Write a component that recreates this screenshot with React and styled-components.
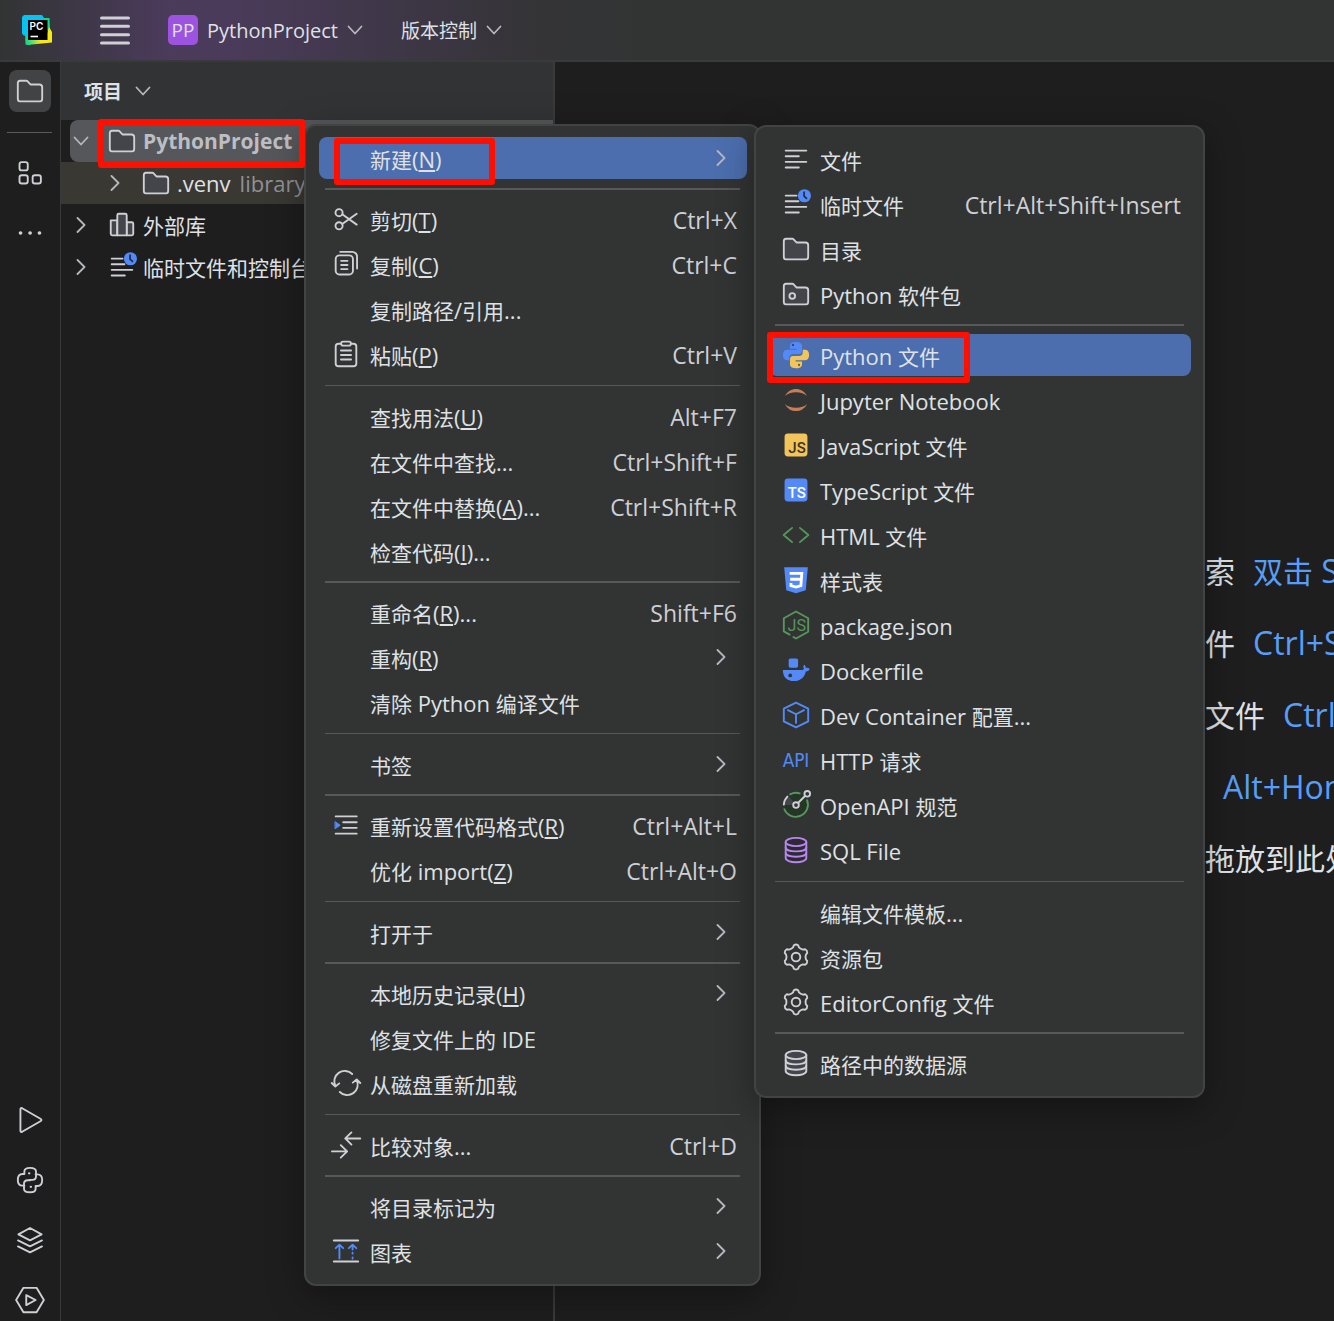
import React from "react";
import styled, { createGlobalStyle, css } from "styled-components";

const GlobalStyle = createGlobalStyle`
  * {
    box-sizing: border-box;
  }
  body {
    margin: 0;
    overflow: hidden;
    background: #1e1e1e;
    color: #dfe1e5;
    font-family: "Open Sans", "Noto Sans CJK SC", sans-serif;
    font-size: 21px;
  }
  button {
    border: none;
    padding: 0;
    background: transparent;
    color: inherit;
    font: inherit;
    cursor: pointer;
  }
  ul {
    margin: 0;
    padding: 0;
    list-style: none;
  }
`;

const Window = styled.div`
  height: 100vh;
  display: flex;
  flex-direction: column;
`;

const TitleBar = styled.header`
  height: 62px;
  flex-shrink: 0;
  display: flex;
  align-items: center;
  padding-left: 22px;
  border-bottom: 2px solid #393a3c;
  background: linear-gradient(90deg, #323434 0px, #4b3b5c 170px, #4a3b5a 230px, #353438 520px, #323434 640px);
  font-size: 19px;
`;
const MenuButton = styled.button`
  display: flex;
  margin-left: 48px;
`;
const TitleButton = styled.button`
  display: flex;
  align-items: center;
  gap: 9px;
  margin-left: 38px;
  white-space: nowrap;
`;
const Badge = styled.span`
  width: 30px;
  height: 30px;
  border-radius: 5px;
  background: #9c54e0;
  line-height: 30px;
  text-align: center;
`;

const Body = styled.div`
  flex: 1;
  min-height: 0;
  display: flex;
`;

const Strip = styled.nav`
  width: 61px;
  flex-shrink: 0;
  display: flex;
  flex-direction: column;
  align-items: center;
  gap: 18px;
  padding: 8px 1px 0 0;
  border-right: 1px solid #393a3c;
`;
const StripButton = styled.button`
  width: 42px;
  height: 42px;
  flex-shrink: 0;
  display: flex;
  align-items: center;
  justify-content: center;
  border-radius: 8px;
  background: ${(p) => (p.$active ? "#424344" : "transparent")};
`;
const StripLine = styled.div`
  width: 45px;
  height: 1px;
  margin: 2px 0 1px;
  flex-shrink: 0;
  background: #5a5c5e;
`;
const Spacer = styled.div`
  flex: 1;
`;

const Panel = styled.aside`
  width: 494px;
  flex-shrink: 0;
  border-right: 2px solid #393a3c;
`;
const PanelHeader = styled.div`
  height: 58px;
  display: flex;
  align-items: center;
  padding-left: 23px;
  background: #323335;
`;
const PanelTitle = styled.button`
  display: flex;
  align-items: center;
  gap: 13px;
  font-size: 19px;
  font-weight: 700;
`;
const TreeRow = styled.div`
  position: relative;
  height: 42px;
  display: flex;
  align-items: center;
  padding-left: ${(p) => 9 + p.$level * 34}px;
  white-space: nowrap;
  ${(p) =>
    p.$tone === "library" &&
    css`
      background: #3a3833;
    `}
  ${(p) =>
    p.$tone === "selected" &&
    css`
      margin-left: 9px;
      padding-left: 0;
      border-radius: 8px 0 0 8px;
      background: #55575a;
      color: #bcbec4;
      font-weight: 700;
    `}
`;
const Toggle = styled.button`
  width: 22px;
  display: flex;
  justify-content: center;
  margin-right: 15px;
`;
const TreeName = styled.span`
  margin: 0 9px 0 6px;
`;
const Muted = styled.span`
  color: #8f9196;
`;

const Editor = styled.main`
  flex: 1;
  min-width: 0;
  display: flex;
  flex-direction: column;
  justify-content: center;
  padding: 46px 0 0 560px;
  overflow: hidden;
`;
const Hint = styled.div`
  height: 72px;
  line-height: 72px;
  font-size: 30px;
  white-space: nowrap;
`;
const HintKey = styled.span`
  margin-left: 18px;
  color: #589df6;
`;

const Popup = styled.ul`
  position: absolute;
  left: ${(p) => p.$left}px;
  top: ${(p) => p.$top}px;
  width: ${(p) => p.$width}px;
  padding: 10px 12px 10px 13px;
  border: 2px solid #424444;
  border-radius: 12px;
  background: #323433;
  box-shadow: 0 10px 36px rgba(0, 0, 0, 0.35);
  z-index: 1;
`;
const MenuRow = styled.li`
  height: 45px;
  padding-top: 1px;
`;
const Item = styled.button`
  position: relative;
  width: 100%;
  height: 42px;
  display: flex;
  align-items: center;
  padding: 0 10px 0 12px;
  border-radius: 8px;
  background: ${(p) => (p.$active ? "#4c6eae" : "transparent")};
  text-align: left;
  white-space: nowrap;
`;
const IconSlot = styled.span`
  width: 30px;
  height: 30px;
  margin-right: 9px;
  flex-shrink: 0;
`;
const ItemText = styled.span`
  flex: 1;
  padding-top: 2px;
  u {
    text-decoration-thickness: 2px;
    text-underline-offset: 2px;
  }
`;
const Shortcut = styled.kbd`
  padding-top: 2px;
  font-family: inherit;
  font-size: 23px;
  color: #ced0d6;
`;
const SubArrow = styled.span`
  display: flex;
  margin-right: 8px;
`;
const Divider = styled.li`
  height: ${(p) => (p.$thick ? 2 : 1)}px;
  margin: ${(p) => (p.$thick ? 7 : 8)}px 7px ${(p) => (p.$thick ? 7 : 8)}px 6px;
  background: #575958;
`;

// red frame drawn round a step of the walkthrough
const Mark = styled.span`
  position: absolute;
  left: ${(p) => p.$x}px;
  top: ${(p) => p.$y}px;
  width: ${(p) => p.$w}px;
  height: ${(p) => p.$h}px;
  border: 6px solid #ff0f00;
  border-radius: 3px;
  pointer-events: none;
  z-index: 3;
`;

// latin letters are set one size up beside the chinese ones
const Latin = styled.span`
  font-size: ${(p) => p.$size}px;
`;
const Mixed = ({ text, size = 22 }) =>
  text
    .split(/([\x20-\x7e]+)/)
    .filter(Boolean)
    .map((part, i) =>
      /[\x20-\x7e]/.test(part) ? (
        <Latin key={i} $size={size}>
          {part.split(/(_._)/).map((s, j) => (/^_._$/.test(s) ? <u key={j}>{s[1]}</u> : s))}
        </Latin>
      ) : (
        part
      )
    );

/* ---------- icons, 16 unit grid ---------- */
const Svg = styled.svg`
  display: block;
  fill: none;
  stroke: #ced0d6;
  stroke-linecap: round;
  stroke-linejoin: round;
`;
const Icon = ({ children, size = 30, ...rest }) => (
  <Svg width={size} height={size} viewBox="0 0 16 16" aria-hidden="true" {...rest}>
    {children}
  </Svg>
);

const ChevronSvg = styled(Svg)`
  stroke: #b4b8bf;
`;
const Chevron = ({ dir = "down" }) => (
  <ChevronSvg width="16" height="16" viewBox="0 0 16 16" strokeWidth="1.8" aria-hidden="true">
    <path d={dir === "down" ? "M1.5 4.5 8 11.5 14.5 4.5" : "M4.5 1 11.5 8 4.5 15"} />
  </ChevronSvg>
);

const folderPath =
  "M8.1 4.35 8.25 4.5H13A1.5 1.5 0 0 1 14.5 6V12.1C14.5 12.95 13.93 13.5 13.37 13.5H2.63C2.07 13.5 1.5 12.95 1.5 12.1V3.87C1.5 3.05 2.07 2.5 2.63 2.5H6.12C6.26 2.5 6.39 2.56 6.48 2.65Z";
const Folder = ({ fill = "#43454a" }) => (
  <Icon>
    <path d={folderPath} fill={fill} />
  </Icon>
);
const PackageFolder = () => (
  <Icon>
    <path d={folderPath} fill="#43454a" />
    <circle cx="6" cy="9" r="1.5" />
  </Icon>
);
const TextFile = () => (
  <Icon>
    <path d="M2.5 3.5H13.5M2.5 6.5H9.5M2.5 9.5H13.5M2.5 12.5H9.5" />
  </Icon>
);
const Scratch = () => (
  <Icon overflow="visible">
    <path d="M2.5 3.5H8.3M2.5 6.5H9.3M2.5 9.5H13.5M2.5 12.5H9.5" />
    <circle cx="12.5" cy="3.6" r="3.5" fill="#548af7" stroke="none" />
    <path d="M12.3 1.7V3.8L13.6 5" stroke="#1e2a45" strokeWidth="0.9" />
  </Icon>
);
const Library = () => (
  <Icon>
    <path d="M2 5.5H5.5V13.5H2.8A.8.8 0 0 1 2 12.7ZM10.5 6.5H13.2A.8.8 0 0 1 14 7.3V12.7A.8.8 0 0 1 13.2 13.5H10.5Z" fill="#43454a" />
    <path d="M5.5 2.8A.8.8 0 0 1 6.3 2H9.7A.8.8 0 0 1 10.5 2.8V13.5H5.5Z" fill="#43454a" />
  </Icon>
);
const Scissors = () => (
  <Icon>
    <circle cx="4.3" cy="4.6" r="1.9" />
    <circle cx="4.3" cy="11.6" r="1.9" />
    <path d="M6 5.5 13.7 11M6 10.7 13.7 5.2" />
  </Icon>
);
const Copy = () => (
  <Icon>
    <rect x="2.5" y="3.4" width="9.2" height="10.2" rx="2" />
    <path d="M4.9 1.5H11.3A2.6 2.6 0 0 1 13.9 4.1V10.4M5.4 6.3H8.8M5.4 8.5H8.8M5.4 10.7H8.8" />
  </Icon>
);
const Paste = () => (
  <Icon>
    <path d="M5.3 2.5H4A1.5 1.5 0 0 0 2.5 4V13A1.5 1.5 0 0 0 4 14.5H12A1.5 1.5 0 0 0 13.5 13V4A1.5 1.5 0 0 0 12 2.5H10.7" />
    <rect x="5.4" y="1.4" width="5.2" height="2.1" rx="1" />
    <path d="M5.3 6.1H10.7M5.3 8.5H10.7M5.3 10.9H10.7" />
  </Icon>
);
const Reformat = () => (
  <Icon>
    <path d="M2.5 3.4H13.7M6.5 6.5H13.7M6.5 9.5H13.7M2.5 12.6H13.7" />
    <path d="M2.3 6.3 4.9 8.1 2.3 9.9Z" fill="#548af7" stroke="#548af7" strokeWidth="0.5" />
  </Icon>
);
const Reload = () => (
  <Icon overflow="visible">
    <path d="M11.3 3.2A5.6 5.6 0 0 0 2.3 9.6M.4 8 2.3 9.9 4.4 8.2M4.7 12.8A5.6 5.6 0 0 0 13.7 6.4M11.6 7.8 13.7 6.1 15.6 8" />
  </Icon>
);
const Compare = () => (
  <Icon overflow="visible">
    <path d="M15.6 4.5H7.6M10.9 1.3 7.6 4.5 10.9 7.8M.5 11.4H8.6M5.2 8.1 8.6 11.4 5.2 14.7" />
  </Icon>
);
const Diagram = () => (
  <Icon>
    <path d="M1.5 2.4H14.5M1.5 13.6H14.5" />
    <path d="M4.5 12V4.8M2.5 6.5 4.5 4.6 6.5 6.5M11.5 5V7.2M11.5 8.9V9.4M11.5 11.4V12M9.5 6.5 11.5 4.6 13.5 6.5" stroke="#548af7" />
  </Icon>
);

const snake = "M7.9 1C5.6 1 4.8 1.9 4.8 3V4.6H8.2V5.2H3.4C1.9 5.2 1 6.2 1 8 1 9.8 1.9 10.8 3.2 10.8H4.4V9.4C4.4 8.2 5.3 7.5 6.4 7.5H9.6C10.6 7.5 11.2 6.8 11.2 5.9V3C11.2 1.7 10.1 1 7.9 1Z";
const PythonFile = () => (
  <Icon>
    <path d={snake} fill="#548af7" stroke="none" />
    <circle cx="6.4" cy="2.7" r="0.6" fill="#2b3f6b" stroke="none" />
    <g transform="rotate(180 8 8)">
      <path d={snake} fill="#f2c55c" stroke="none" />
      <circle cx="6.4" cy="2.7" r="0.6" fill="#6e5a2b" stroke="none" />
    </g>
  </Icon>
);
const Jupyter = () => (
  <Icon>
    <path d="M2.1 5.9C4.6.8 11.4.8 13.9 5.9 11.4 3.2 4.6 3.2 2.1 5.9ZM2.1 10.1C4.6 15.2 11.4 15.2 13.9 10.1 11.4 12.8 4.6 12.8 2.1 10.1Z" fill="#c77d55" stroke="none" />
  </Icon>
);
const LangSquare = ({ name, bg, fg }) => (
  <Icon>
    <rect x="1.9" y="1.9" width="12.2" height="12.2" rx="1.8" fill={bg} stroke="none" />
    <text x="13.2" y="12.1" textAnchor="end" fontFamily="Roboto" fontSize="8" fontWeight="500" fill={fg} stroke="none">
      {name}
    </text>
  </Icon>
);
const Html = () => (
  <Icon>
    <path d="M5.9 4.2 1.4 8 5.9 11.8M10.1 4.2 14.6 8 10.1 11.8" stroke="#57965c" />
  </Icon>
);
const Css = () => (
  <Icon>
    <path d="M1.7 1.2H14.3L13.2 13.4 8 15 2.8 13.4Z" fill="#548af7" stroke="none" />
    <path d="M4.6 4.5H11.1L10.6 11 8 11.8 5.3 11V9.6M4.9 7.6H10.8" stroke="#fff" strokeWidth="1.5" strokeLinecap="butt" strokeLinejoin="miter" />
  </Icon>
);
const NodePackage = () => (
  <Icon overflow="visible">
    <path d="M4.6 13.1 1.5 11.4V4.4L8 .8 14.5 4.4V11.6L8 15.2 6.6 14.4" stroke="#57965c" />
    <text x="8.4" y="11.3" textAnchor="middle" fontFamily="Roboto" fontSize="8.6" fill="#57965c" stroke="none">
      JS
    </text>
  </Icon>
);
const Docker = () => (
  <Icon>
    <rect x="4.1" y="1.8" width="5" height="5" rx="0.9" fill="#548af7" stroke="none" />
    <path d="M1 8H11.6C12.2 7.8 12.3 7.2 12 6.7 11.8 6 12 5.5 12.5 5.2 13 5.7 13.2 6.3 13.2 6.9 14 6.7 14.8 6.9 15.3 7.4 14.9 8.3 14.1 8.7 13.2 8.8 12.6 12 10.3 13.9 6.9 13.9 3.2 13.9 1 11.9 1 8Z" fill="#548af7" stroke="none" />
    <circle cx="4.9" cy="10.9" r="1" fill="#323433" stroke="none" />
  </Icon>
);
const Cube = () => (
  <Icon>
    <path d="M8 1.4 14.5 4.6V11.4L8 14.6 1.5 11.4V4.6ZM3.7 5.4 8 7.6 12.3 5.4M8 7.6V12.2" stroke="#548af7" />
  </Icon>
);
const Api = () => (
  <Icon>
    <text x="8" y="11.8" textAnchor="middle" fontFamily="DejaVu Sans Condensed" fontSize="10" fill="#548af7" stroke="none">
      API
    </text>
  </Icon>
);
const OpenApi = () => (
  <Icon overflow="visible">
    <circle cx="8" cy="8" r="6.3" fill="#253627" stroke="none" />
    <path d="M8 8 1.5 8A6.5 6.5 0 0 1 3.9 3Z" fill="#43454a" stroke="none" />
    <path d="M4.9 2.3A6.5 6.5 0 0 1 10 1.8M13.9 5.4A6.5 6.5 0 1 1 1.8 10.2" stroke="#57965c" />
    <path d="M1.5 7.8A6.5 6.5 0 0 1 3.4 3.5M9.2 6.8 12.8 3.2" />
    <circle cx="8" cy="8" r="1.5" fill="#323433" />
    <circle cx="14" cy="2" r="1.5" fill="#323433" />
  </Icon>
);
const Database = ({ color, fill }) => (
  <Icon>
    <path d="M2.5 3.7V12.3C2.5 13.6 5 14.5 8 14.5S13.5 13.6 13.5 12.3V3.7" fill={fill} stroke={color} />
    <ellipse cx="8" cy="3.7" rx="5.5" ry="2.2" fill={fill} stroke={color} />
    <path d="M2.5 6.6C2.5 7.9 5 8.7 8 8.7S13.5 7.9 13.5 6.6M2.5 9.5C2.5 10.8 5 11.6 8 11.6S13.5 10.8 13.5 9.5" stroke={color} />
  </Icon>
);

const gearPoint = (r, deg) => {
  const a = ((deg - 90) * Math.PI) / 180;
  return `${(8 + r * Math.cos(a)).toFixed(2)} ${(8 + r * Math.sin(a)).toFixed(2)}`;
};
const gearPath =
  [0, 60, 120, 180, 240, 300]
    .map((a, i) => `${i ? "L" : "M"}${gearPoint(5.4, a - 17)} L${gearPoint(6.4, a - 10)} Q${gearPoint(7, a)} ${gearPoint(6.4, a + 10)} L${gearPoint(5.4, a + 17)} Q${gearPoint(4.9, a + 30)} ${gearPoint(5.4, a + 43)}`)
    .join(" ") + "Z";
const Gear = () => (
  <Icon>
    <path d={gearPath} />
    <circle cx="8" cy="8" r="2.3" />
  </Icon>
);

const Structure = () => (
  <Icon>
    <rect x="2.4" y="2.2" width="4.4" height="4.4" rx="1.2" />
    <rect x="2.4" y="9.2" width="4.4" height="4.4" rx="1.2" />
    <rect x="9.4" y="9.2" width="4.4" height="4.4" rx="1.2" />
  </Icon>
);
const Dots = () => (
  <Icon>
    <path d="M2.9 8H3M8 8H8.1M13 8H13.1" strokeWidth="1.9" />
  </Icon>
);
const Run = () => (
  <Icon>
    <path d="M2.9 2.2C2.9 1.7 3.4 1.5 3.8 1.7L13.8 7.5C14.2 7.7 14.2 8.3 13.8 8.5L3.8 14.3C3.4 14.5 2.9 14.3 2.9 13.8Z" />
  </Icon>
);
const snakeLine = "M5 11H4C2.2 11 1.5 9.8 1.5 8S2.2 4.8 4 4.8H5V3.4C5 2.1 6 1.5 8 1.5S11.2 2.1 11.2 3.4V6C11.2 7.2 10.4 7.9 9.2 7.9H8";
const PythonOutline = () => (
  <Icon>
    <path d={snakeLine} />
    <path d={snakeLine} transform="rotate(180 8 8)" />
    <path d="M7.5 4.4H7.6M8.4 11.6H8.5" strokeWidth="1.2" />
  </Icon>
);
const Layers = () => (
  <Icon>
    <path d="M8 1.6 14.2 5 8 8.2 1.8 5ZM1.6 8.2 8 11.4 14.4 8.2M1.6 11.4 8 14.6 14.4 11.4" />
  </Icon>
);
const Services = () => (
  <Icon overflow="visible">
    <path d="M4.5 1.5H11.5L15.4 8 11.5 14.5H4.5L.6 8Z" />
    <path d="M6 5.4 11 8 6 10.7Z" />
  </Icon>
);
const Burger = () => (
  <Svg width="30" height="30" viewBox="0 0 30 30" strokeWidth="3" aria-hidden="true">
    <path d="M1.5 3H28.5M1.5 11.3H28.5M1.5 19.7H28.5M1.5 28H28.5" />
  </Svg>
);
const Logo = () => (
  <Svg width="30" height="30" viewBox="0 0 30 30" role="img" aria-label="PyCharm">
    <defs>
      <linearGradient id="pc-lower" x1="0" y1="0.8" x2="1" y2="0.6">
        <stop offset="0.1" stopColor="#21d789" />
        <stop offset="0.55" stopColor="#f5ea14" />
      </linearGradient>
    </defs>
    <path d="M3 15 27 3.5 28 14 8 30 3.5 29.5Z" fill="#12d98a" stroke="none" />
    <path d="M22 3 27.5 3 27.5 12 22 12Z" fill="#12d98a" stroke="none" />
    <path d="M27 12 30 17V27.5L5 30 3.2 24 24 22Z" fill="url(#pc-lower)" stroke="none" />
    <path d="M2 0H20L24 6 6 22 1 20 0 18V2Z" fill="#07c3f2" stroke="none" />
    <rect x="6" y="5" width="19.5" height="20" fill="#000" stroke="none" />
    <text x="7.6" y="15" fontFamily="Inter" fontSize="10" fontWeight="600" fill="#fff" stroke="none">
      PC
    </text>
    <path d="M8.5 21.5H16" stroke="#fff" strokeWidth="1.6" strokeLinecap="butt" />
  </Svg>
);

/* ---------- menus ---------- */
const contextMenu = [
  { text: "新建(_N_)", sub: true, active: true, mark: { $x: 15, $y: 1, $w: 161, $h: 47 } },
  { line: "thick" },
  { icon: <Scissors />, text: "剪切(_T_)", keys: "Ctrl+X" },
  { icon: <Copy />, text: "复制(_C_)", keys: "Ctrl+C" },
  { text: "复制路径/引用..." },
  { icon: <Paste />, text: "粘贴(_P_)", keys: "Ctrl+V" },
  { line: "thin" },
  { text: "查找用法(_U_)", keys: "Alt+F7" },
  { text: "在文件中查找...", keys: "Ctrl+Shift+F" },
  { text: "在文件中替换(_A_)...", keys: "Ctrl+Shift+R" },
  { text: "检查代码(_I_)..." },
  { line: "thick" },
  { text: "重命名(_R_)...", keys: "Shift+F6" },
  { text: "重构(_R_)", sub: true },
  { text: "清除 Python 编译文件" },
  { line: "thin" },
  { text: "书签", sub: true },
  { line: "thick" },
  { icon: <Reformat />, text: "重新设置代码格式(_R_)", keys: "Ctrl+Alt+L" },
  { text: "优化 import(_Z_)", keys: "Ctrl+Alt+O" },
  { line: "thin" },
  { text: "打开于", sub: true },
  { line: "thick" },
  { text: "本地历史记录(_H_)", sub: true },
  { text: "修复文件上的 IDE" },
  { icon: <Reload />, text: "从磁盘重新加载" },
  { line: "thin" },
  { icon: <Compare />, text: "比较对象...", keys: "Ctrl+D" },
  { line: "thick" },
  { text: "将目录标记为", sub: true },
  { icon: <Diagram />, text: "图表", sub: true },
];

const newMenu = [
  { icon: <TextFile />, text: "文件" },
  { icon: <Scratch />, text: "临时文件", keys: "Ctrl+Alt+Shift+Insert" },
  { icon: <Folder />, text: "目录" },
  { icon: <PackageFolder />, text: "Python 软件包" },
  { line: "thick" },
  { icon: <PythonFile />, text: "Python 文件", active: true, mark: { $x: -2, $y: -2, $w: 203, $h: 51 } },
  { icon: <Jupyter />, text: "Jupyter Notebook" },
  { icon: <LangSquare name="JS" bg="#f2c55c" fg="#3d3223" />, text: "JavaScript 文件" },
  { icon: <LangSquare name="TS" bg="#548af7" fg="#ffffff" />, text: "TypeScript 文件" },
  { icon: <Html />, text: "HTML 文件" },
  { icon: <Css />, text: "样式表" },
  { icon: <NodePackage />, text: "package.json" },
  { icon: <Docker />, text: "Dockerfile" },
  { icon: <Cube />, text: "Dev Container 配置..." },
  { icon: <Api />, text: "HTTP 请求" },
  { icon: <OpenApi />, text: "OpenAPI 规范" },
  { icon: <Database color="#b589ec" fill="#2f2936" />, text: "SQL File" },
  { line: "thin" },
  { text: "编辑文件模板..." },
  { icon: <Gear />, text: "资源包" },
  { icon: <Gear />, text: "EditorConfig 文件" },
  { line: "thick" },
  { icon: <Database color="#ced0d6" fill="#43454a" />, text: "路径中的数据源" },
];

const Menu = ({ items, label, ...place }) => (
  <Popup role="menu" aria-label={label} {...place}>
    {items.map((item, i) =>
      item.line ? (
        <Divider key={i} role="separator" $thick={item.line === "thick"} />
      ) : (
        <MenuRow key={i} role="none">
          <Item role="menuitem" $active={item.active}>
            <IconSlot>{item.icon}</IconSlot>
            <ItemText>
              <Mixed text={item.text} />
            </ItemText>
            {item.keys && <Shortcut>{item.keys}</Shortcut>}
            {item.sub && (
              <SubArrow>
                <Chevron dir="right" />
              </SubArrow>
            )}
            {item.mark && <Mark {...item.mark} />}
          </Item>
        </MenuRow>
      )
    )}
  </Popup>
);

const hints = [
  ["随处搜索", "双击 Shift"],
  ["转到文件", "Ctrl+Shift+N"],
  ["最近的文件", "Ctrl+E"],
  ["导航栏", "Alt+Home"],
  ["将文件拖放到此处以打开"],
];

export default function App() {
  return (
    <>
      <GlobalStyle />
      <Window>
        <TitleBar>
          <Logo />
          <MenuButton aria-label="主菜单">
            <Burger />
          </MenuButton>
          <TitleButton>
            <Badge>PP</Badge>
            <Mixed text="PythonProject" size={20} />
            <Chevron />
          </TitleButton>
          <TitleButton>
            版本控制
            <Chevron />
          </TitleButton>
        </TitleBar>
        <Body>
          <Strip>
            <StripButton $active aria-label="项目">
              <Folder fill="none" />
            </StripButton>
            <StripLine />
            <StripButton aria-label="结构">
              <Structure />
            </StripButton>
            <StripButton aria-label="更多">
              <Dots />
            </StripButton>
            <Spacer />
            <StripButton aria-label="运行">
              <Run />
            </StripButton>
            <StripButton aria-label="Python 控制台">
              <PythonOutline />
            </StripButton>
            <StripButton aria-label="Python 软件包">
              <Layers />
            </StripButton>
            <StripButton aria-label="服务">
              <Services />
            </StripButton>
          </Strip>
          <Panel>
            <PanelHeader>
              <PanelTitle>
                项目
                <Chevron />
              </PanelTitle>
            </PanelHeader>
            <TreeRow $level={0} $tone="selected">
              <Toggle aria-label="折叠">
                <Chevron />
              </Toggle>
              <Folder />
              <TreeName>PythonProject</TreeName>
              <Mark $x={28} $y={-1} $w={207} $h={49} />
            </TreeRow>
            <TreeRow $level={1} $tone="library">
              <Toggle aria-label="展开">
                <Chevron dir="right" />
              </Toggle>
              <Folder />
              <TreeName>
                <Mixed text=".venv" />
              </TreeName>
              <Muted>
                <Mixed text="library根目录" />
              </Muted>
            </TreeRow>
            <TreeRow $level={0}>
              <Toggle aria-label="展开">
                <Chevron dir="right" />
              </Toggle>
              <Library />
              <TreeName>外部库</TreeName>
            </TreeRow>
            <TreeRow $level={0}>
              <Toggle aria-label="展开">
                <Chevron dir="right" />
              </Toggle>
              <Scratch />
              <TreeName>临时文件和控制台</TreeName>
            </TreeRow>
          </Panel>
          <Editor>
            {hints.map(([name, keys]) => (
              <Hint key={name}>
                {name}
                {keys && (
                  <HintKey>
                    <Mixed text={keys} size={32} />
                  </HintKey>
                )}
              </Hint>
            ))}
          </Editor>
        </Body>
      </Window>
      <Menu items={contextMenu} label="项目菜单" $left={304} $top={124} $width={457} />
      <Menu items={newMenu} label="新建" $left={754} $top={125} $width={451} />
    </>
  );
}
